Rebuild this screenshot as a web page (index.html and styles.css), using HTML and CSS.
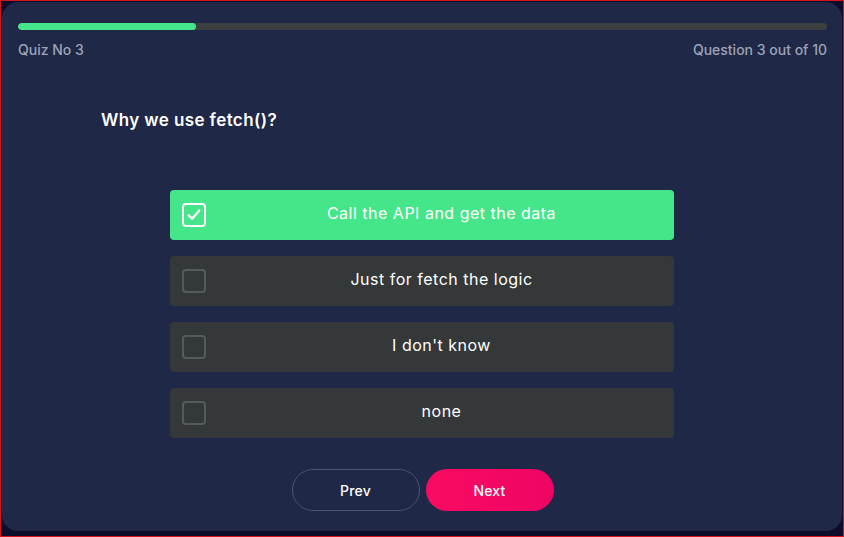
FILE: index.html
```html
<!DOCTYPE html>
<html>
<head>
<meta charset="utf-8">
<link rel="stylesheet" href="styles.css">
</head>
<body>
<div class="card">
  <div class="progress"><div class="progress-fill" style="width:22%"></div></div>
  <div class="meta">
    <span>Quiz No 3</span>
    <span>Question 3 out of 10</span>
  </div>
  <h2 class="question">Why we use fetch()?</h2>
  <div class="options">
    <div class="option selected">
      <span class="check">
        <svg viewBox="0 0 24 24" width="18" height="18"><path d="M5 12.5l4.5 4.5L19 6" fill="none" stroke="#fff" stroke-width="3.2" stroke-linecap="round" stroke-linejoin="round"/></svg>
      </span>
      <span class="label">Call the API and get the data</span>
    </div>
    <div class="option">
      <span class="check"></span>
      <span class="label">Just for fetch the logic</span>
    </div>
    <div class="option">
      <span class="check"></span>
      <span class="label">I don't know</span>
    </div>
    <div class="option">
      <span class="check"></span>
      <span class="label">none</span>
    </div>
  </div>
  <div class="actions">
    <button class="btn btn-prev">Prev</button>
    <button class="btn btn-next">Next</button>
  </div>
</div>
</body>
</html>
```
FILE: styles.css
```css
* { box-sizing: border-box; }
html, body { margin: 0; padding: 0; }
body {
  width: 844px;
  height: 537px;
  border: 1px solid #d4141f;
  background: #0c0d2b;
  padding: 1px 1px 5px 1px;
  font-family: Inter, "Noto Sans", sans-serif;
}
.card {
  height: 100%;
  background: #1f2847;
  border-radius: 16px;
  padding: 21px 15px 0 16px;
  display: flex;
  flex-direction: column;
}
.progress {
  height: 7px;
  background: #3b3f40;
  border-radius: 4px;
  overflow: hidden;
}
.progress-fill {
  height: 100%;
  background: #45e68a;
  border-radius: 4px;
}
.meta {
  display: flex;
  justify-content: space-between;
  margin-top: 11px;
  color: #9ea3b8;
  font-size: 14px;
  font-weight: 500;
  letter-spacing: 0;
}
.question {
  margin: 52px 0 0 83px;
  color: #fff;
  font-size: 17px;
  font-weight: 600;
  letter-spacing: 0.4px;
}
.options {
  margin: 60px auto 0;
  width: 504px;
  display: flex;
  flex-direction: column;
  gap: 16px;
  position: relative;
  left: -1px;
}
.option {
  height: 50px;
  background: #343838;
  border-radius: 4px;
  display: flex;
  align-items: center;
  padding: 0 0 0 12px;
}
.option.selected { background: #45e68a; }
.check {
  width: 24px;
  height: 24px;
  border: 2px solid #555a5b;
  border-radius: 4px;
  display: flex;
  align-items: center;
  justify-content: center;
  flex: none;
}
.selected .check { border-color: #fff; }
.label {
  flex: 1;
  text-align: center;
  color: #fff;
  font-size: 16px;
  letter-spacing: 0.5px;
  margin-left: 4px;
  margin-top: -4px;
}
.actions {
  margin-top: 31px;
  display: flex;
  justify-content: center;
  gap: 6px;
}
.btn {
  width: 128px;
  height: 42px;
  border-radius: 21px;
  font-family: inherit;
  font-size: 14px;
  font-weight: 500;
  letter-spacing: 0.2px;
  color: #fff;
  cursor: pointer;
}
.btn-prev {
  background: transparent;
  border: 1px solid #4c5370;
}
.btn-next {
  background: linear-gradient(90deg, #f90b61, #ee0464);
  border: none;
}
```
